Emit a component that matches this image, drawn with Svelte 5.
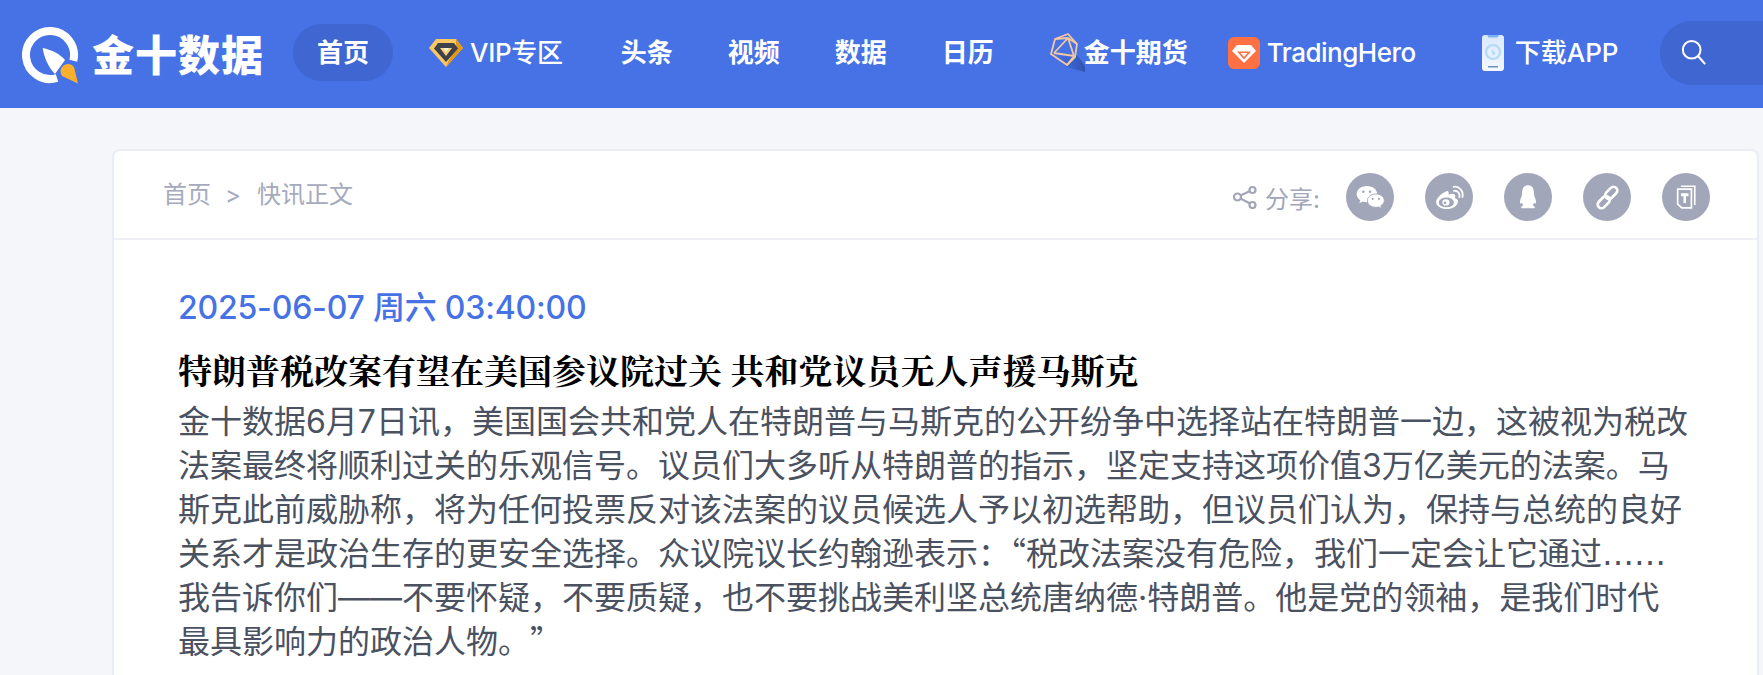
<script lang="ts">
  const crumbs = ['首页', '快讯正文'];
  const simpleNav = ['头条', '视频', '数据', '日历'];
  const title = '特朗普税改案有望在美国参议院过关 共和党议员无人声援马斯克';
</script>

<header class="topbar">
  <a class="logo" href="#top">
    <svg class="logo-mark" viewBox="0 0 60 60" width="60" height="60">
      <path d="M51.3 33.8A24 24 0 1 0 35 51" fill="none" stroke="#fff" stroke-width="8"/>
      <path d="M20.7 21C30 23 38 27 43 33L33 47C26 40 22 30 20.7 21Z" fill="#fff"/>
      <path d="M40 49L56 56.5L52 40A7.5 7.5 0 0 0 40 49Z" fill="#fbb02d"/>
    </svg>
    <span class="logo-text">金十数据</span>
  </a>

  <nav class="nav">
    <a class="nav-item active" href="#top">首页</a>
    <a class="nav-item vip" href="#top">
      <svg viewBox="0 0 34 28" width="34" height="28">
        <path d="M7 0H27L34 9L17 28L0 9Z" fill="#fbc763"/>
        <path d="M27 0L34 9L17 28L20 21L27 10Z" fill="#e39a12"/>
        <path d="M9 4H25L29 9.500L17 23L5 9.500Z" fill="#3e404c"/>
        <path d="M11 9H23L17 17Z" fill="#fbd078"/>
        <path d="M14 9L17 13L20 9Z" fill="#fff3d4"/>
      </svg>
      VIP专区
    </a>
    {#each simpleNav as item}
      <a class="nav-item plain" href="#top">{item}</a>
    {/each}
    <a class="nav-item futures" href="#top">
      <svg viewBox="0 0 36 40" width="36" height="40">
        <defs>
          <linearGradient id="fade" x1="0" y1="0" x2="1" y2="0">
            <stop offset="0" stop-color="#2f55b5" stop-opacity="0"/>
            <stop offset="1" stop-color="#2f55b5"/>
          </linearGradient>
        </defs>
        <path d="M4 24L27 22L35 33L35 39L16 34Z" fill="url(#fade)"/>
        <g fill="none" stroke="#f3c7a2" stroke-width="1.800" stroke-linejoin="round">
          <path d="M18 1L27 11L25 24L17 32L1 21L5 6Z"/>
          <path d="M5 6L18 5L27 11M18 5L4 20M18 5L24 23M4 20L24 23L17 32"/>
        </g>
      </svg>
      金十期货
    </a>
    <a class="nav-item hero" href="#top">
      <svg viewBox="0 0 32 32" width="32" height="32">
        <rect width="32" height="32" rx="6" fill="#ff7043"/>
        <path d="M9 8H23L28 14L16 26L4 14Z" fill="#fff"/>
        <path d="M9 14.500H23L16 22.500Z" fill="#ff7043"/>
        <path d="M12.500 16H19.500L16 20Z" fill="#fff"/>
      </svg>
      TradingHero
    </a>
    <a class="nav-item app" href="#top">
      <svg viewBox="0 0 22 36" width="22" height="36">
        <defs>
          <linearGradient id="phone" x1="0" y1="0" x2="0" y2="1">
            <stop offset="0" stop-color="#dbe9ff"/>
            <stop offset="1" stop-color="#f4f8ff"/>
          </linearGradient>
        </defs>
        <rect width="22" height="36" rx="3" fill="url(#phone)"/>
        <path d="M5 0H17L15.500 2.500H6.500Z" fill="#7fb2f5"/>
        <circle cx="11" cy="17" r="7" fill="none" stroke="#b7dbfb" stroke-width="2.500"/>
        <path d="M9 14L14 18L11 21Z" fill="#b7dbfb"/>
        <rect x="6" y="31" width="10" height="1.500" fill="#6d8fc9"/>
      </svg>
      下载APP
    </a>
  </nav>

  <div class="search">
    <svg viewBox="0 0 28 30" width="26" height="28" fill="none" stroke="#fff" stroke-width="2.200">
      <circle cx="11.500" cy="11.500" r="9.500"/>
      <path d="M18.500 18.500L26 27"/>
    </svg>
  </div>
</header>

<main class="page">
  <article class="card">
    <div class="card-head">
      <div class="crumbs">
        <span>{crumbs[0]}</span>
        <span class="sep">&gt;</span>
        <span>{crumbs[1]}</span>
      </div>
      <div class="share">
        <svg class="share-icon" viewBox="0 0 24 24" width="24" height="24" fill="none" stroke="#a1a6b8" stroke-width="2.200">
          <circle cx="19.500" cy="5" r="3"/>
          <circle cx="4.500" cy="12" r="3.500"/>
          <circle cx="19.500" cy="20" r="3"/>
          <path d="M7.500 10.500L17 6M7.500 13.500L17 18.500"/>
        </svg>
        <span class="share-label">分享:</span>
        <div class="share-btns">
          <span class="circle">
            <svg viewBox="0 0 32 28" width="29" height="25">
              <path d="M12 1C5.500 1 .5 5 .5 10C.5 13 2 15.300 4.500 17L3.500 20.500L7.500 18.500C9 19 10.500 19.200 12 19.200C18.500 19.200 23.500 15 23.500 10S18.500 1 12 1Z" fill="#fff"/>
              <circle cx="8" cy="7.500" r="1.400" fill="#a1a6b8"/>
              <circle cx="15.500" cy="7.500" r="1.400" fill="#a1a6b8"/>
              <path d="M22 10C16.500 10 12.500 13.400 12.500 17.500S16.500 25 22 25C23 25 24 24.800 25 24.500L28.500 26.500L27.500 23.200C29.800 21.800 31.500 19.800 31.500 17.500C31.500 13.400 27.500 10 22 10Z" fill="#fff" stroke="#a1a6b8"/>
              <circle cx="18.500" cy="15.500" r="1.200" fill="#a1a6b8"/>
              <circle cx="25.500" cy="15.500" r="1.200" fill="#a1a6b8"/>
            </svg>
          </span>
          <span class="circle">
            <svg viewBox="0 0 32 28" width="29" height="25">
              <path d="M12.500 7C7 9.500 1 14.500 1 19C1 23.500 6.500 27 13 27C19.500 27 25.500 23.500 25.500 18.500C25.500 15.800 23.500 15 22 14.500C23 12 22.500 10.500 20.500 10C18.500 9.700 16 10.500 15 11C15.500 8.500 15 6 12.500 7Z" fill="#fff"/>
              <ellipse cx="12.500" cy="19.500" rx="8.500" ry="5.500" fill="#a1a6b8"/>
              <ellipse cx="12" cy="19.500" rx="4" ry="3.500" fill="#fff"/>
              <circle cx="11" cy="20" r="1.500" fill="#a1a6b8"/>
              <path d="M21 6.500C25 6 28 9.500 27 13.500M20.500 2C27 1 32 7 30.500 13.500" fill="none" stroke="#fff" stroke-width="2" stroke-linecap="round"/>
            </svg>
          </span>
          <span class="circle">
            <svg viewBox="0 0 20 26" width="18" height="24">
              <path d="M10 0C5 0 3.500 4 3.500 8C3.500 11 2.500 13 1.500 16C.8 18.500 .8 20 1.800 20.200C2.500 20.300 3 19.500 3.300 19C3.600 20.500 4 21.500 5 22.500C3 23 2 24 2.500 25.500H17.500C18 24 17 23 15 22.500C16 21.500 16.400 20.500 16.700 19C17 19.500 17.500 20.300 18.200 20.200C19.200 20 19.200 18.500 18.500 16C17.500 13 16.500 11 16.500 8C16.500 4 15 0 10 0Z" fill="#fff"/>
            </svg>
          </span>
          <span class="circle">
            <svg viewBox="0 0 28 28" width="25" height="25" fill="none" stroke="#fff" stroke-width="3">
              <rect x="14" y="1" width="8.500" height="15.500" rx="4.250" transform="rotate(45 18.250 8.750)"/>
              <rect x="5.500" y="11.500" width="8.500" height="15.500" rx="4.250" transform="rotate(45 9.750 19.250)"/>
            </svg>
          </span>
          <span class="circle">
            <svg viewBox="0 0 24 30" width="20" height="25" fill="none" stroke="#fff" stroke-width="2">
              <path d="M6 1.500H22.500V24"/>
              <path d="M2 5H18.500V27.500H7L2 23Z"/>
              <path d="M6 10H15V13.500H12V21.500H9V13.500H6Z" fill="#fff" stroke="none"/>
            </svg>
          </span>
        </div>
      </div>
    </div>

    <div class="card-body">
      <div class="date">2025-06-07 周六 03:40:00</div>
      <h1 class="title">{title}</h1>
      <p class="text">金十数据6月7日讯，美国国会共和党人在特朗普与马斯克的公开纷争中选择站在特朗普一边，这被视为税改法案最终将顺利过关的乐观信号。议员们大多听从特朗普的指示，坚定支持这项价值3万亿美元的法案。马斯克此前威胁称，将为任何投票反对该法案的议员候选人予以初选帮助，但议员们认为，保持与总统的良好关系才是政治生存的更安全选择。众议院议长约翰逊表示：<span class="cjk">“</span>税改法案没有危险，我们一定会让它通过<span class="dots">……</span>我告诉你们——不要怀疑，不要质疑，也不要挑战美利坚总统唐纳德·特朗普。他是党的领袖，是我们时代最具影响力的政治人物<span class="cjk end">。”</span></p>
    </div>
  </article>
</main>

<style>
  :global(body) {
    margin: 0;
    height: 675px;
    overflow: hidden;
    background: #f4f6fa;
    font-family: Inter, "Noto Sans CJK SC", sans-serif;
  }

  a {
    color: inherit;
    text-decoration: none;
  }

  .topbar {
    display: flex;
    align-items: center;
    box-sizing: border-box;
    height: 108px;
    padding: 0 0 3px 22px;
    background: #4672e6;
    color: #fff;
    overflow: hidden;
  }

  .logo {
    display: flex;
    align-items: center;
    flex: none;
  }

  .logo-mark {
    margin-top: 6px;
    margin-bottom: -3px;
  }

  .logo-text {
    margin-left: 10px;
    font-family: "Noto Sans CJK SC", sans-serif;
    font-size: 42px;
    font-weight: 900;
    line-height: 48px;
    letter-spacing: 1px;
  }

  .nav {
    display: flex;
    align-items: center;
    margin-left: 29px;
    flex: none;
  }

  .nav-item {
    display: flex;
    align-items: center;
    flex: none;
    font-size: 26px;
    font-weight: 600;
    white-space: nowrap;
    line-height: 32px;
  }

  .active {
    justify-content: center;
    width: 100px;
    height: 57px;
    border-radius: 29px;
    background: #3f66d1;
  }

  .vip {
    gap: 7px;
    margin-left: 36px;
    font-weight: 500;
    letter-spacing: -0.3px;
  }

  .plain {
    width: 52px;
    margin-left: 55px;
  }

  .vip + .plain {
    margin-left: 58px;
  }

  .futures {
    margin-left: 56px;
  }

  .futures svg {
    margin-right: -2px;
  }

  .hero {
    gap: 7px;
    margin-left: 40px;
    font-weight: 500;
    letter-spacing: -0.5px;
  }

  .app {
    gap: 11px;
    margin-left: 66px;
    font-weight: 500;
  }

  .search {
    display: flex;
    align-items: center;
    width: 140px;
    height: 64px;
    margin-left: 41px;
    padding-left: 21px;
    border-radius: 32px 0 0 32px;
    background: #3f66d1;
    flex: none;
  }

  .page {
    padding: 41px 4px 0 112px;
  }

  .card {
    height: 526px;
    overflow: hidden;
    border: 2px solid #e9edf6;
    border-bottom: 0;
    border-radius: 8px 8px 0 0;
    background: #fff;
  }

  .card-head {
    display: flex;
    align-items: center;
    justify-content: space-between;
    box-sizing: border-box;
    height: 89px;
    padding: 5px 47px 0 49px;
    border-bottom: 2px solid #eef0f5;
  }

  .crumbs {
    display: flex;
    gap: 16px;
    margin-top: -5px;
    font-size: 24px;
    color: #a5aabc;
    line-height: 32px;
  }

  .sep {
    margin-left: -2px;
  }

  .share {
    display: flex;
    align-items: center;
    color: #a1a6b8;
  }

  .share-label {
    margin-left: 8px;
    font-size: 24px;
  }

  .share-btns {
    display: flex;
    gap: 31px;
    margin-left: 26px;
  }

  .circle {
    display: flex;
    align-items: center;
    justify-content: center;
    width: 48px;
    height: 48px;
    border-radius: 50%;
    background: #a1a6b8;
  }

  .card-body {
    padding: 50px 66px 0 64px;
  }

  .date {
    font-size: 32px;
    font-weight: 500;
    line-height: 36px;
    letter-spacing: -0.2px;
    color: #4672e6;
  }

  .title {
    margin: 22px 0 0;
    font-family: "Noto Serif CJK SC", "Noto Sans CJK SC", serif;
    font-size: 34px;
    font-weight: 700;
    line-height: 44px;
    color: #000;
  }

  .text {
    margin: 8px 0 0;
    font-size: 32px;
    line-height: 44px;
    color: #4a5160;
  }

  .cjk {
    font-family: "Noto Sans CJK SC", sans-serif;
    line-height: 0;
  }

  .end {
    text-spacing-trim: space-all;
  }

  .dots {
    font-family: "DejaVu Sans", sans-serif;
    line-height: 0;
  }
</style>
